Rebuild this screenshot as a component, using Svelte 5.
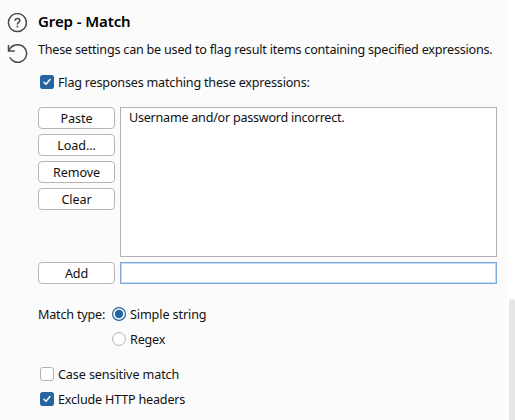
<script>
  const actions = ['Paste', 'Load...', 'Remove', 'Clear'];
  let flag = $state(true);
  let caseSensitive = $state(false);
  let excludeHeaders = $state(true);
  let matchType = $state('simple');
  let expression = $state('');
</script>

{#snippet check(on)}
  <svg class="mark" width="14" height="14" viewBox="0 0 14 14">
    {#if on}
      <rect width="14" height="14" rx="2.8" fill="#26649f" />
      <path d="M4 7.2 6 9.2 10 4.6" fill="none" stroke="#fff" stroke-width="1.5" stroke-linecap="round" stroke-linejoin="round" />
    {:else}
      <rect x=".5" y=".5" width="13" height="13" rx="2.5" fill="#fff" stroke="#b3b0b0" />
    {/if}
  </svg>
{/snippet}

{#snippet radio(on)}
  <svg class="mark" width="14" height="14" viewBox="0 0 14 14">
    <circle cx="7" cy="7" r="6.4" fill="#fff" stroke={on ? '#26649f' : '#b3b0b0'} stroke-width={on ? 1.2 : 1} />
    {#if on}<circle cx="7" cy="7" r="4.2" fill="#26649f" />{/if}
  </svg>
{/snippet}

<div class="window">
  <main class="panel">
    <div class="icons">
      <svg width="20" height="20" viewBox="0 0 20 20" fill="none" stroke="#4a4a4a" stroke-width="1.5">
        <circle cx="10.4" cy="9.6" r="9" />
        <path d="M8 7.7C8 6.2 9 5.4 10.4 5.4s2.5.9 2.5 2.2c0 1.8-2.5 1.9-2.5 3.9" />
        <path d="M10.4 12.7v1.7" stroke-width="1.7" />
      </svg>
      <svg width="21" height="20" viewBox="0 0 21 20" fill="none" stroke="#4a4a4a" stroke-width="1.5">
        <path d="M1.5 1v6h6.3" />
        <path d="M1.8 6.7C3.4 2.9 6.9.7 10.9.7a8.8 8.8 0 1 1-8.1 12.5" />
      </svg>
    </div>
    <section class="content">
      <h1>Grep - Match</h1>
      <p><span class="t-desc">These settings can be used to flag result items containing specified expressions.</span></p>
      <button class="option first" onclick={() => (flag = !flag)}>{@render check(flag)}<span class="t-flag">Flag responses matching these expressions:</span></button>
      <div class="editor">
        <div class="actions">
          {#each actions as action}<button class="action">{action}</button>{/each}
        </div>
        <div class="list"><span class="t-item">Username and/or password incorrect.</span></div>
        <button class="action">Add</button>
        <input bind:value={expression} aria-label="Expression" />
      </div>
      <div class="types">
        <span class="label">Match type:</span>
        <div>
          <button class="option" onclick={() => (matchType = 'simple')}>{@render radio(matchType === 'simple')}<span class="t-simple">Simple string</span></button>
          <button class="option" onclick={() => (matchType = 'regex')}>{@render radio(matchType === 'regex')}<span class="t-regex">Regex</span></button>
        </div>
      </div>
      <div class="flags">
        <button class="option" onclick={() => (caseSensitive = !caseSensitive)}>{@render check(caseSensitive)}<span class="t-case">Case sensitive match</span></button>
        <button class="option" onclick={() => (excludeHeaders = !excludeHeaders)}>{@render check(excludeHeaders)}<span class="t-exclude">Exclude HTTP headers</span></button>
      </div>
    </section>
  </main>
  <div class="track"><div class="thumb"></div></div>
</div>

<style>
  .window {
    display: flex;
    width: 515px;
    height: 420px;
    overflow: hidden;
    background: #fff;
    color: #111;
    font: 12.6px/18px "Noto Sans", sans-serif;
    letter-spacing: -.2px;
    white-space: nowrap;
  }
  button, input { box-sizing: border-box; margin: 0; padding: 0; font: inherit; color: inherit; letter-spacing: inherit; }
  .panel { display: flex; width: 507px; background: #fbfbfb; }
  .icons { display: flex; flex-direction: column; gap: 11px; width: 20px; padding: 13px 11px 0 7px; }
  .icons svg { display: block; }
  .content { width: 459px; }
  h1 { margin: 11px 0 0; font-size: 15px; line-height: 20px; font-weight: 600; color: #000; letter-spacing: -.1px; }
  p { margin: 10px 0 0; }
  .option { display: flex; align-items: center; gap: 4px; height: 25px; border: 0; background: none; }
  .option span { padding-top: 2px; }
  .first { margin: 10px 0 0 2px; }
  .mark { display: block; flex: none; }
  .editor { display: grid; grid-template-columns: 77px 377px; grid-template-rows: 150px 22px; gap: 5px; margin-top: 13px; }
  .actions { display: flex; flex-direction: column; gap: 5px; }
  .action { height: 22px; padding-top: 1px; border: 1px solid #bab4b6; border-radius: 4px; background: #fff; line-height: 19px; letter-spacing: -.1px; }
  .list { box-sizing: border-box; padding: 1px 8px; border: 1px solid #b4b0b1; background: #fff; }
  .t-desc { letter-spacing: -.22px; }
  .t-item { letter-spacing: -.25px; }
  .t-case, .t-simple { letter-spacing: -.11px; }
  input { width: 377px; height: 22px; border: 1px solid #7ea9d9; outline: 0; background: #fff; box-shadow: inset 0 0 0 1px #c5dbf5; border-radius: 0; }
  .types { display: flex; margin-top: 17px; }
  .label { width: 74px; line-height: 28px; }
  .flags { margin: 10px 0 0 2px; }
  .track { display: flex; align-items: flex-end; width: 6px; padding-left: 2px; }
  .thumb { width: 6px; height: 121px; border-radius: 3px 3px 0 0; background: #e6e6e6; }
</style>
